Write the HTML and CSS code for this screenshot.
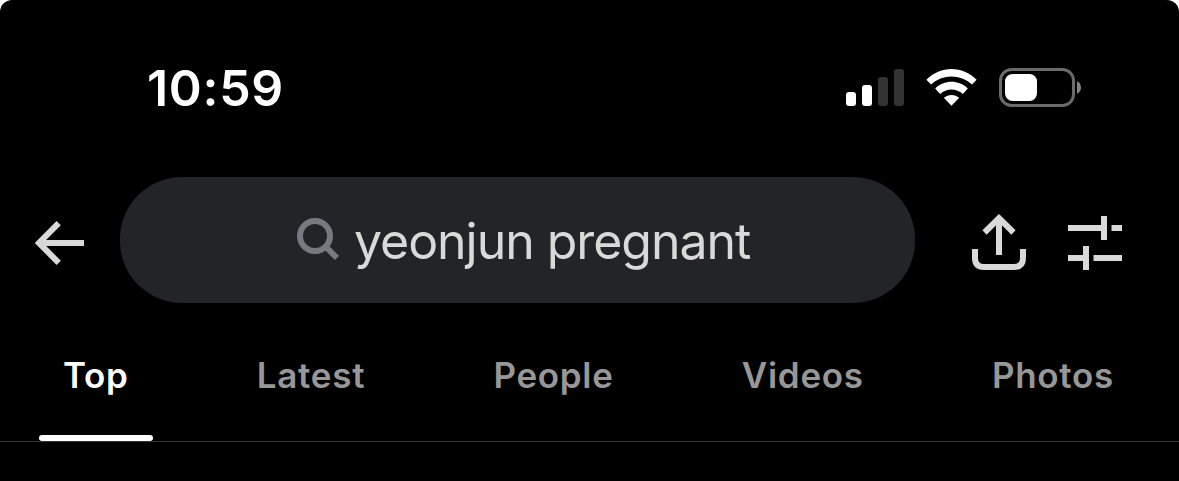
FILE: index.html
```html
<!DOCTYPE html>
<html lang="en">
<head>
<meta charset="utf-8">
<title>Search</title>
<link rel="stylesheet" href="styles.css">
</head>
<body>
<main class="screen">
  <header class="status">
    <time class="clock">10:59</time>
    <div class="indicators">
      <svg class="signal" width="58" height="37" viewBox="0 0 58 37">
        <g fill="#fff"><rect y="23" width="10" height="14" rx="3"/><rect x="16" y="16" width="10" height="21" rx="3"/></g>
        <g fill="#333"><rect x="32" y="8" width="10" height="29" rx="3"/><rect x="48" width="10" height="37" rx="3"/></g>
      </svg>
      <svg class="wifi" width="51" height="37" viewBox="0 0 51 37" fill="#fff">
        <path d="M.4 10.7C14.5-3.5 36.500-3.500 50.600 10.700L46 15.400C34.500 4.700 16.500 4.700 5 15.400Z"/>
        <path d="M9.200 19.500C18.300 10.600 32.700 10.600 41.800 19.500L36.900 24.900C30.500 18.900 20.500 18.900 14.100 24.900Z"/>
        <path d="M17.800 28.800C22.200 24.900 28.800 24.900 33.200 28.800L25.500 36.800Z"/>
      </svg>
      <svg class="battery" width="83" height="40" viewBox="0 0 83 40">
        <rect x="1.500" y="1.500" width="73" height="36" rx="11" fill="none" stroke="#6b6b6b" stroke-width="3"/>
        <rect x="6" y="6" width="32" height="27" rx="7.500" fill="#fff"/>
        <path d="M78 13.200C83.300 15.500 83.300 23.500 78 25.800Z" fill="#858585"/>
      </svg>
    </div>
  </header>
  <div class="toolbar">
    <svg class="back" width="50" height="46" viewBox="0 0 50 46" fill="none" stroke="#d9d9d9" stroke-width="6">
      <path d="M23.700 3.200 4 23 23.700 42.800M4 23H49"/>
    </svg>
    <div class="search">
      <svg class="lens" width="44" height="44" viewBox="0 0 44 44" fill="none" stroke="#76797d" stroke-width="6">
        <circle cx="18" cy="18" r="15"/><path d="M28.500 28.500 40 40"/>
      </svg>
      <span class="query">yeonjun pregnant</span>
    </div>
    <svg class="share" width="54" height="56" viewBox="0 0 54 56" fill="none" stroke="#d9d9d9" stroke-width="6">
      <path d="M12.500 18.500 27 4.200 41.500 18.500M27 5V41M3 35V44Q3 53 12 53H42Q51 53 51 44V35"/>
    </svg>
    <svg class="filter" width="54" height="54" viewBox="0 0 54 54" fill="none" stroke="#d9d9d9" stroke-width="6">
      <path d="M0 12H36M36 0V24M43.500 12H54M0 42H18M18 30V54M25.500 42H54"/>
    </svg>
  </div>
  <nav class="tabs">
    <a class="tab active">Top</a>
    <a class="tab">Latest</a>
    <a class="tab">People</a>
    <a class="tab">Videos</a>
    <a class="tab">Photos</a>
  </nav>
</main>
</body>
</html>
```

FILE: styles.css
```css
* { box-sizing: border-box; }
body {
  margin: 0;
  background: #fff;
  font-family: Inter, "Liberation Sans", sans-serif;
}
svg { display: block; flex: none; }
.screen {
  height: 481px;
  background: #000;
  border-radius: 12px 12px 0 0;
  overflow: hidden;
}
.status {
  display: flex;
  justify-content: space-between;
  height: 177px;
  padding: 68px 97px 0 147px;
}
.clock {
  height: 40px;
  color: #fff;
  font-size: 50px;
  font-weight: 600;
  line-height: 40px;
  letter-spacing: 0.7px;
}
.indicators { display: flex; align-items: flex-start; }
.signal { margin-top: 1px; }
.wifi { margin: 1px 22px 0; }
.toolbar {
  display: flex;
  align-items: center;
  height: 126px;
  padding-left: 35px;
}
.back { margin-top: 6px; }
.search {
  display: flex;
  flex: none;
  align-items: center;
  width: 795px;
  height: 126px;
  margin-left: 35px;
  padding-left: 177px;
  border-radius: 62px;
  background: #232427;
}
.query {
  margin: 2px 0 0 13px;
  color: #d9d9d9;
  font-size: 50px;
  line-height: 60px;
  letter-spacing: -1.05px;
  white-space: nowrap;
}
.share { margin: 4px 0 0 57px; }
.filter { margin: 6px 0 0 42px; }
.tabs {
  display: flex;
  gap: 79.7px;
  height: 139px;
  padding-left: 39px;
  border-bottom: 1px solid #333;
}
.tab {
  display: flex;
  flex-direction: column;
  justify-content: space-between;
  padding: 50px 24.5px 0 24px;
  color: #979797;
  font-size: 35px;
  font-weight: 600;
  line-height: 44px;
  letter-spacing: 0.7px;
}
.active { color: #fff; }
.active::after {
  content: "";
  height: 6px;
  margin: 0 -24.5px 0 -24px;
  border-radius: 3px;
  background: #fff;
}
```
